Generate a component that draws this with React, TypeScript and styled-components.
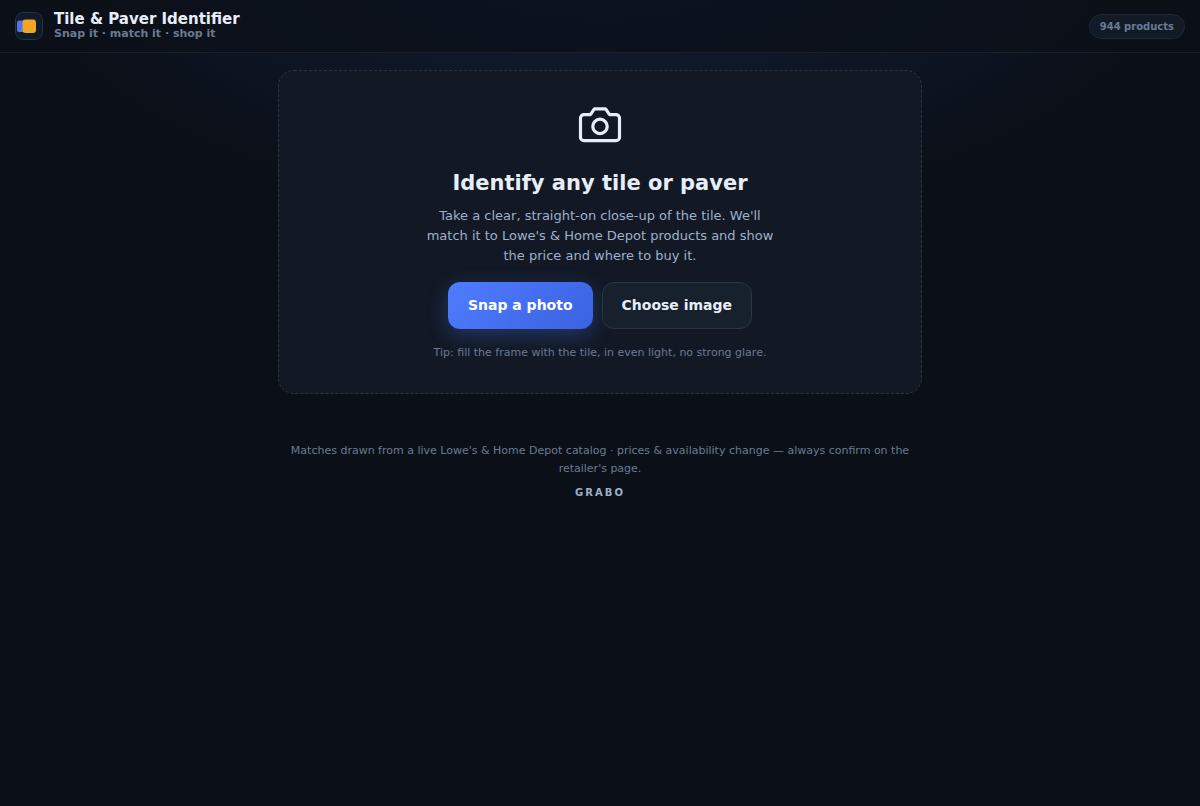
import React from "react";
import styled, { createGlobalStyle, css } from "styled-components";

const GlobalStyle = createGlobalStyle`
  * { box-sizing: border-box; }
  html { background: #0b0f17; }
  body {
    margin: 0;
    min-height: 100vh;
    font-family: "DejaVu Sans", sans-serif;
    color: #e8eef8;
    background: radial-gradient(1120px 560px at 50% -10%, #13213a 0%, transparent 55%) no-repeat #0b0f17;
  }
`;

const Header = styled.header`
  display: flex;
  align-items: center;
  gap: 11px;
  padding: 12px 15px;
  border-bottom: 1px solid #1a212d;
  background: rgba(11, 15, 23, 0.72);
`;

const Logo = styled.svg`
  display: block;
  width: 28px;
  height: 28px;
`;

const Brand = styled.div`
  flex: 1;
`;

const Title = styled.h1`
  margin: 0;
  font-size: 15px;
  line-height: 15px;
`;

const Tagline = styled.p`
  margin: 0;
  font-size: 11px;
  font-weight: 700;
  line-height: 13px;
  color: #6b7a93;
`;

const CountPill = styled.span`
  padding: 5px 10px;
  border: 1px solid #1f2937;
  border-radius: 999px;
  background: #111a26;
  color: #6b7a93;
  font-size: 10px;
  font-weight: 700;
  line-height: 13px;
`;

const Main = styled.main`
  max-width: 680px;
  margin: 0 auto;
  padding: 17px 18px;
`;

const Card = styled.section`
  display: flex;
  flex-direction: column;
  align-items: center;
  padding: 30px 22px 33px;
  border: 1px dashed #2a3442;
  border-radius: 16px;
  background: #121925;
  text-align: center;
`;

const Camera = styled.svg`
  width: 48px;
  height: 48px;
`;

const Heading = styled.h2`
  margin: 20px 0 9px;
  font-size: 21px;
  line-height: 28px;
`;

const Lead = styled.p`
  max-width: 360px;
  margin: 0 0 16px;
  color: #9fb0c9;
  font-size: 13px;
  line-height: 20px;
`;

const Actions = styled.div`
  display: flex;
  flex-wrap: wrap;
  justify-content: center;
  gap: 9px;
`;

const Button = styled.button<{ $primary?: boolean }>`
  padding: 14px 19px;
  border: 1px solid #2a3644;
  border-radius: 12px;
  background: #17202d;
  color: #e8eef8;
  font: 700 14px/17px "DejaVu Sans", sans-serif;
  cursor: pointer;
  ${({ $primary }) =>
    $primary &&
    css`
      border-color: transparent;
      background: linear-gradient(135deg, #4f7cff, #3a62e0) border-box;
      color: #fff;
      box-shadow: 0 6px 20px rgba(79, 124, 255, 0.3);
    `}
`;

const Tip = styled.p`
  margin: 17px 0 0;
  color: #6b7a93;
  font-size: 11px;
  line-height: 14px;
`;

const Footer = styled.footer`
  max-width: 680px;
  margin: 0 auto;
  padding: 31px 18px;
  color: #6b7a93;
  font-size: 11px;
  line-height: 18px;
  text-align: center;
`;

const Note = styled.p`
  margin: 0 0 6px;
`;

const Maker = styled.strong`
  display: block;
  color: #9fb0c9;
  font-size: 10px;
  letter-spacing: 2px;
`;

export default function App() {
  return (
    <>
      <GlobalStyle />
      <Header>
        <Logo viewBox="0 0 28 28" aria-hidden="true">
          <rect x="0.5" y="0.5" width="27" height="27" rx="7.5" fill="#111a28" stroke="#263144" />
          <rect x="2" y="8.500" width="11" height="11.500" rx="2" fill="#4f73e8" />
          <rect x="7.500" y="7.500" width="13.500" height="13.500" rx="3" fill="#f5a524" />
        </Logo>
        <Brand>
          <Title>Tile &amp; Paver Identifier</Title>
          <Tagline>Snap it · match it · shop it</Tagline>
        </Brand>
        <CountPill>944 products</CountPill>
      </Header>
      <Main>
        <Card>
          <Camera
            viewBox="0 0 24 24"
            fill="none"
            stroke="currentColor"
            strokeWidth="1.6"
            strokeLinecap="round"
            strokeLinejoin="round"
            aria-hidden="true"
          >
            <path d="M4 6.800H7.200L9.200 3.900H14.800L16.800 6.800H20A1.750 1.750 0 0 1 21.750 8.550V18.100A1.750 1.750 0 0 1 20 19.850H4A1.750 1.750 0 0 1 2.250 18.100V8.550A1.750 1.750 0 0 1 4 6.800z" />
            <circle cx="12" cy="12.700" r="3.600" />
          </Camera>
          <Heading>Identify any tile or paver</Heading>
          <Lead>
            Take a clear, straight-on close-up of the tile. We'll match it to Lowe's &amp; Home Depot
            products and show the price and where to buy it.
          </Lead>
          <Actions>
            <Button type="button" $primary>Snap a photo</Button>
            <Button type="button">Choose image</Button>
          </Actions>
          <Tip>Tip: fill the frame with the tile, in even light, no strong glare.</Tip>
        </Card>
      </Main>
      <Footer>
        <Note>
          Matches drawn from a live Lowe's &amp; Home Depot catalog · prices &amp; availability change —
          always confirm on the retailer's page.
        </Note>
        <Maker>GRABO</Maker>
      </Footer>
    </>
  );
}
